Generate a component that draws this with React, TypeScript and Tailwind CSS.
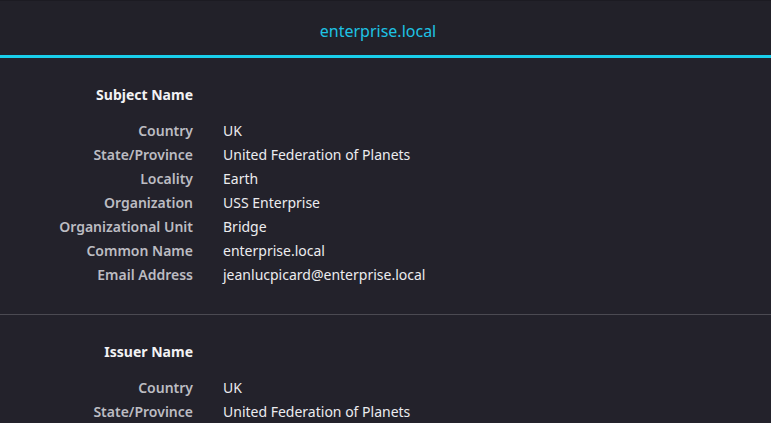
type Field = [string, string];

const SUBJECT: Field[] = [
  ["Country", "UK"],
  ["State/Province", "United Federation of Planets"],
  ["Locality", "Earth"],
  ["Organization", "USS Enterprise"],
  ["Organizational Unit", "Bridge"],
  ["Common Name", "enterprise.local"],
  ["Email Address", "jeanlucpicard@enterprise.local"],
];

const ISSUER: Field[] = [
  ["Country", "UK"],
  ["State/Province", "United Federation of Planets"],
  ["Locality", "Earth"],
  ["Organization", "USS Enterprise"],
];

function Section({ title, fields, last }: { title: string; fields: Field[]; last?: boolean }) {
  return (
    <section className={`pt-[25px] pb-[27px] ${last ? "" : "border-b border-[#4b4a52]"}`}>
      <div className="grid grid-cols-[193px_1fr] gap-x-[30px] leading-6">
        <div className="text-right font-bold text-[#f2f2f4] mb-3">{title}</div>
        <div />
        {fields.map(([label, value]) => (
          <div key={label} className="contents">
            <div className="text-right font-semibold text-[#bcbcc2] whitespace-nowrap">{label}</div>
            <div className="text-[#ececef] whitespace-nowrap">{value}</div>
          </div>
        ))}
      </div>
    </section>
  );
}

export default function App() {
  return (
    <div
      className="h-[423px] w-[771px] overflow-hidden bg-[#23222b] text-[14px]"
      style={{ fontFamily: '"Noto Sans", "Open Sans", sans-serif' }}
    >
      <header className="h-[58px] border-t border-[#1c1b22] bg-[#222129] border-b-[3px] border-b-[#19cfeb] flex items-center justify-center pt-[5px] pr-[15px]">
        <span className="text-[16px] text-[#1ec3e4]">enterprise.local</span>
      </header>
      <Section title="Subject Name" fields={SUBJECT} />
      <Section title="Issuer Name" fields={ISSUER} last />
    </div>
  );
}
